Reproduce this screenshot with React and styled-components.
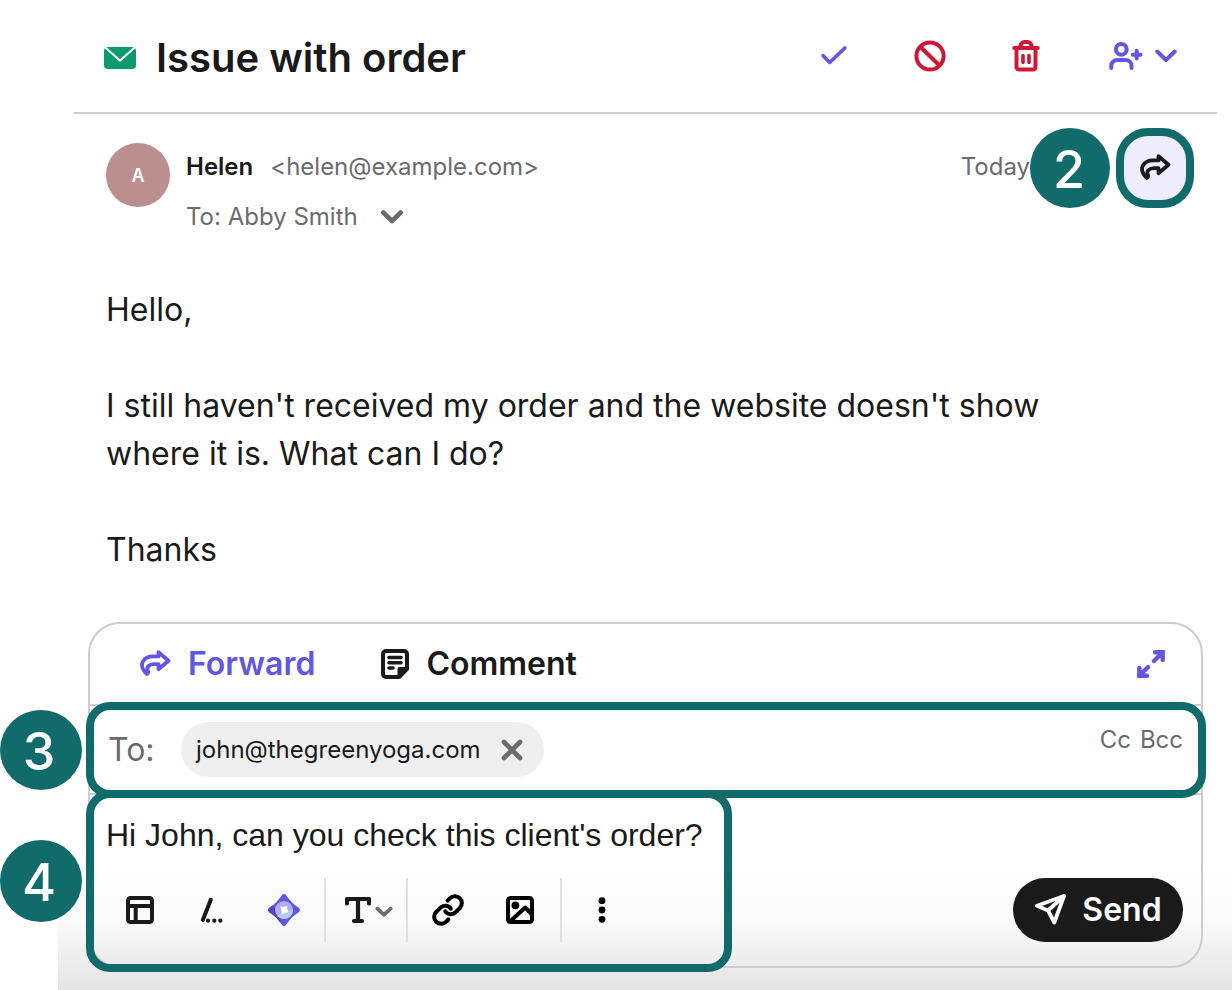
import React, { useState } from 'react'
import styled, { createGlobalStyle } from 'styled-components'

const GlobalStyle = createGlobalStyle`
  * {
    box-sizing: border-box;
  }

  body {
    margin: 0;
    background: #fff;
    color: #1a1a1a;
    font-family: Inter, "Liberation Sans", sans-serif;
  }

  button, input, textarea {
    font: inherit;
    color: inherit;
  }

  svg {
    display: block;
    flex: none;
  }
`

const Page = styled.main`
  display: flex;
  flex-direction: column;
  min-height: 100vh;
  margin-left: 58px;
  padding-bottom: 22px;
  background: linear-gradient(#fff, #fafafa 45%, #e4e4e4) bottom / 100% 128px no-repeat;
`

const Header = styled.header`
  display: flex;
  align-items: center;
  justify-content: space-between;
  height: 114px;
  margin: 0 15px 0 16px;
  padding: 0 40px 0 30px;
  border-bottom: 2px solid #cdcdcd;
`

const Subject = styled.div`
  display: flex;
  align-items: center;
  gap: 20px;
  padding-top: 4px;
`

const Title = styled.h1`
  margin: 0;
  font-size: 40px;
  line-height: 48px;
  font-weight: 600;
`

const Actions = styled.div`
  display: flex;
  align-items: center;
  gap: 64px;
`

const IconButton = styled.button`
  display: flex;
  align-items: center;
  justify-content: center;
  gap: ${(props) => props.$gap || 0}px;
  min-width: 32px;
  height: 32px;
  padding: 0;
  border: 0;
  background: none;
  color: ${(props) => props.$color || '#1a1a1a'};
  cursor: pointer;
`

const AssignButton = styled(IconButton)`
  justify-content: flex-end;
  width: 71px;
`

const Message = styled.article`
  padding: 14px 38px 48px 48px;
`

const MessageHead = styled.div`
  display: flex;
  align-items: flex-start;
  gap: 16px;
  height: 158px;
`

const Avatar = styled.div`
  display: flex;
  align-items: center;
  justify-content: center;
  width: 64px;
  height: 64px;
  margin-top: 15px;
  border-radius: 50%;
  background: #bc8f8f;
  color: #fff;
  font-size: 18px;
  font-weight: 600;
`

const Sender = styled.div`
  flex: 1;
  padding-top: 23px;
  font-size: 24px;
  line-height: 32px;
  color: #6b6b6b;
`

const SenderLine = styled.div`
  display: flex;
  align-items: center;
  gap: 17px;
  margin-bottom: 18px;
`

const Name = styled.strong`
  font-weight: 600;
  color: #1a1a1a;
`

const Recipient = styled.button`
  display: flex;
  align-items: center;
  gap: 23px;
  padding: 0;
  border: 0;
  background: none;
  color: #6b6b6b;
  line-height: 32px;
  cursor: pointer;
`

const MessageTools = styled.div`
  position: relative;
  display: flex;
  gap: 86px;
`

const Time = styled.time`
  padding-top: 23px;
  font-size: 24px;
  line-height: 32px;
  color: #6b6b6b;
`

const ForwardButton = styled.button`
  display: flex;
  align-items: center;
  justify-content: center;
  width: 78px;
  height: 80px;
  padding: 0;
  border: 8px solid #116b6a;
  border-radius: 32px;
  background: #efedfd;
  color: #1a1a1a;
  cursor: pointer;
`

// Numbered step that sits on top of the ui
const Step = styled.span`
  position: absolute;
  top: ${(props) => props.$top}px;
  left: ${(props) => props.$left};
  right: ${(props) => props.$right};
  display: flex;
  align-items: center;
  justify-content: center;
  width: ${(props) => props.$width || 82}px;
  height: ${(props) => props.$height || 80}px;
  padding: 3px ${(props) => props.$pad || 2}px 0 0;
  border-radius: 50%;
  background: #116b6a;
  color: #fff;
  font-size: 52px;
  font-weight: 500;
  line-height: 60px;
`

// Frame drawn around the part that a step is about
const Frame = styled.div`
  position: absolute;
  inset: ${(props) => props.$inset};
  width: ${(props) => props.$width};
  border: 8px solid #116b6a;
  border-radius: 24px;
  pointer-events: none;
`

const Text = styled.div`
  max-width: 1000px;
  font-size: 32px;
  line-height: 48px;

  p {
    margin: 0 0 48px;
  }

  p:last-child {
    margin: 0;
  }
`

const Composer = styled.form`
  margin: 0 29px 0 30px;
  border: 2px solid #cdcdcd;
  border-radius: 32px;
`

const Tabs = styled.div`
  display: flex;
  align-items: center;
  gap: 66px;
  height: 80px;
  padding: 0 34px 0 49px;
`

const Tab = styled.button`
  display: flex;
  align-items: center;
  gap: 17px;
  padding: 0;
  border: 0;
  background: none;
  color: ${(props) => props.$active ? '#6356e0' : '#1a1a1a'};
  font-size: 32px;
  line-height: 40px;
  font-weight: 600;
  cursor: pointer;
`

const Spacer = styled.div`
  flex: 1;
`

const ToRow = styled.div`
  position: relative;
  display: flex;
  align-items: center;
  height: 91px;
  padding: 0 18px;
  border: solid #cdcdcd;
  border-width: 2px 0;
`

const ToLabel = styled.label`
  width: 73px;
  font-size: 32px;
  line-height: 40px;
  color: #6b6b6b;
`

const Chip = styled.span`
  display: flex;
  align-items: center;
  gap: 15px;
  height: 55px;
  padding: 0 16px 0 15px;
  border-radius: 28px;
  background: #efefef;
  font-size: 24px;
  line-height: 32px;
`

const ToInput = styled.input`
  flex: 1;
  min-width: 0;
  margin: 0 16px;
  border: 0;
  outline: 0;
  background: none;
  font-size: 24px;
`

const CopyButtons = styled.div`
  display: flex;
  align-self: flex-start;
  gap: 9px;
  padding-top: 18px;
`

const CopyButton = styled.button`
  padding: 0;
  border: 0;
  background: none;
  color: #6b6b6b;
  font-size: 24px;
  line-height: 32px;
  cursor: pointer;
`

const Editor = styled.div`
  position: relative;
  padding: 20px 18px 24px 16px;
`

const Field = styled.textarea`
  display: block;
  width: 100%;
  height: 40px;
  margin-bottom: 23px;
  padding: 0;
  border: 0;
  outline: 0;
  resize: none;
  background: none;
  font-family: "Liberation Sans", Arial, sans-serif;
  font-size: 32px;
  line-height: 40px;
`

const Toolbar = styled.div`
  display: flex;
  align-items: center;
  justify-content: space-between;
`

const Tools = styled.div`
  display: flex;
`

const ToolGroup = styled.div`
  display: flex;
  align-items: center;
  gap: 40px;
  height: 64px;
  padding: ${(props) => props.$padding || '0 24px'};

  & + & {
    border-left: 2px solid #e0e0e0;
  }
`

const SendButton = styled.button`
  display: flex;
  align-items: center;
  justify-content: center;
  gap: 15px;
  width: 170px;
  height: 64px;
  padding: 0 0 2px;
  border: 0;
  border-radius: 32px;
  background: #1a1a1a;
  color: #fff;
  font-size: 32px;
  font-weight: 600;
  cursor: pointer;
`

const Icon = ({ w, h, stroke = 4, children }) => (
  <svg
    width={w}
    height={h}
    viewBox={`0 0 ${w} ${h}`}
    fill="none"
    stroke="currentColor"
    strokeWidth={stroke}
    strokeLinecap="round"
    strokeLinejoin="round"
    aria-hidden="true"
  >
    {children}
  </svg>
)

const Envelope = () => (
  <Icon w={32} h={22} stroke={2}>
    <rect width="32" height="22" rx="4" fill="#0b9b6d" stroke="none" />
    <path d="M1.5.8 16 13.6 30.5.8" stroke="#fff" strokeLinejoin="miter" />
  </Icon>
)

const Check = () => (
  <Icon w={32} h={32} stroke={3.7}>
    <path d="m5.2 15.7 6.5 6.8L26.8 8" />
  </Icon>
)

const Ban = () => (
  <Icon w={32} h={32} stroke={4}>
    <circle cx="16" cy="16" r="13.6" />
    <path d="m6.5 7 18.5 18" />
  </Icon>
)

const Trash = () => (
  <Icon w={32} h={32} stroke={4}>
    <path d="M4.2 8h23.6" />
    <path d="M10.500 8V6a4 4 0 0 1 4-4h3a4 4 0 0 1 4 4v2" />
    <path d="M6.500 8v19a2.500 2.500 0 0 0 2.500 2.500h14a2.500 2.500 0 0 0 2.500-2.500V8" />
    <path d="M13 15.500v7M19 15.500v7" strokeWidth="3.600" />
  </Icon>
)

const UserPlus = () => (
  <Icon w={36} h={32} stroke={4}>
    <circle cx="12.3" cy="9.3" r="5.4" />
    <path d="M2.2 28v-2a6 6 0 0 1 6-6h8.300a6 6 0 0 1 6 6v2" />
    <path d="M27.7 10.800v7.800M23.800 14.700h7.800" />
  </Icon>
)

const Chevron = ({ stroke = 4 }) => (
  <Icon w={22} h={14} stroke={stroke}>
    <path d="M2.300 2.500 11 11l8.700-8.500" />
  </Icon>
)

const SmallChevron = () => (
  <Icon w={18} h={16} stroke={3.6}>
    <path d="M2.300 6.700 9 12.800l6.700-6.100" stroke="#6b6b6b" />
  </Icon>
)

const Forward = () => (
  <Icon w={32} h={28} stroke={3.8}>
    <path d="M7.800 24C3.500 20.500 1.800 15.200 4 11.400 6.200 7.800 10 6.400 14 6.400h5.500V2.200l10 8.600-10 8.400v-5H15c-5 0-7.800 3-6.200 6.400.8 1.800.2 3-1 3.400z" />
  </Icon>
)

const Note = () => (
  <Icon w={28} h={30}>
    <path d="M2 5a3 3 0 0 1 3-3h18a3 3 0 0 1 3 3v14l-8 9H5a3 3 0 0 1-3-3z" />
    <path d="M26 20h-7.500v7.500z" fill="currentColor" />
    <path d="M8 8.500h12M8 13.700h12M8 19h4" strokeWidth="3.600" />
  </Icon>
)

const Expand = () => (
  <Icon w={28} h={28}>
    <path d="M18 2.300h7.700V10M25.500 2.500 17 11M10 25.700H2.300V18M2.500 25.500 11 17" strokeLinejoin="miter" strokeWidth="4.400" />
  </Icon>
)

const Close = () => (
  <Icon w={22} h={22} stroke={4.6}>
    <path d="m3 3 16 16M19 3 3 19" />
  </Icon>
)

const Layout = () => (
  <Icon w={28} h={28}>
    <rect x="2" y="2" width="24" height="24" rx="2.500" />
    <path d="M2 10h24M9.700 10v16" />
  </Icon>
)

const Slash = () => (
  <Icon w={28} h={28}>
    <path d="M12.800 3.700 4.800 24" />
    <g fill="currentColor" stroke="none">
      <circle cx="10" cy="24.700" r="2.100" />
      <circle cx="16.300" cy="24.700" r="2.100" />
      <circle cx="22.300" cy="24.700" r="2.100" />
    </g>
  </Icon>
)

const Spark = () => (
  <Icon w={32} h={32}>
    <g stroke="none">
      <path d="M16 0c1.600 0 2.300 1.500 4 3.800 2.200 3 5.200 6 8.200 8.200 2.300 1.700 3.800 2.400 3.800 4s-1.500 2.300-3.800 4c-3 2.200-6 5.200-8.200 8.200-1.700 2.300-2.400 3.800-4 3.800s-2.300-1.500-4-3.800c-2.200-3-5.200-6-8.200-8.200C1.500 18.300 0 17.600 0 16s1.500-2.300 3.800-4c3-2.200 6-5.200 8.200-8.200C13.700 1.500 14.400 0 16 0z" fill="#6356e0" />
      <path d="M3.800 12 16 16l-4 12.200c-2.200-3-5.200-6-8.200-8.200C1.500 18.300 0 17.600 0 16s1.500-2.300 3.800-4z" fill="#5246b5" />
      <circle cx="16" cy="16" r="9" fill="#b3aaf0" />
      <path d="M25 16a9 9 0 0 1-15.400 6.300L16 16z" fill="#b3cbfb" />
      <path d="m12.800 12.500 3.200.2 3-1 .3 3.300 1 3-3.300.8-3 1.200-.6-3.500-1-3z" fill="#fff" />
    </g>
  </Icon>
)

const TextFormat = () => (
  <Icon w={26} h={28} stroke={4.2}>
    <path d="M2 7.500V3h22v4.500M13 3v22M9 25h8" />
  </Icon>
)

const LinkIcon = () => (
  <svg width="32" height="32" viewBox="0.5 0.5 23 23" fill="none" stroke="#000" strokeWidth="2.9" strokeLinecap="round" strokeLinejoin="round" aria-hidden="true">
    <path d="M10 13a5 5 0 0 0 7.54.54l3-3a5 5 0 0 0-7.07-7.07l-1.72 1.71" />
    <path d="M14 11a5 5 0 0 0-7.54-.54l-3 3a5 5 0 0 0 7.070 7.070l1.710-1.710" />
  </svg>
)

const Picture = () => (
  <Icon w={28} h={28}>
    <rect x="2" y="2" width="24" height="24" rx="2.500" />
    <circle cx="9.400" cy="9.300" r="3.900" fill="currentColor" stroke="none" />
    <path d="M4 25.500 19.300 11.500 26 18.500" />
  </Icon>
)

const More = () => (
  <Icon w={8} h={28}>
    <g fill="currentColor" stroke="none">
      <circle cx="4" cy="4.700" r="3.400" />
      <circle cx="4" cy="14" r="3.400" />
      <circle cx="4" cy="23.300" r="3.400" />
    </g>
  </Icon>
)

const Plane = () => (
  <Icon w={33} h={32} stroke={3.8}>
    <path d="M30 3 3 12.800l11 4.700 6.300 12z" />
    <path d="M14 17.500 30 3" />
  </Icon>
)

const App = () => {

  const [ tab, setTab ] = useState('forward')
  const [ to, setTo ] = useState(['john@thegreenyoga.com'])

  const removeTo = (mail) => setTo(to.filter((item) => item !== mail))

  return (
    <>
      <GlobalStyle />
      <Page>
        <Header>
          <Subject>
            <Envelope />
            <Title>Issue with order</Title>
          </Subject>
          <Actions>
            <IconButton $color="#6356e0" aria-label="Resolve"><Check /></IconButton>
            <IconButton $color="#ce1836" aria-label="Mark as spam"><Ban /></IconButton>
            <IconButton $color="#ce1836" aria-label="Delete"><Trash /></IconButton>
            <AssignButton $color="#6356e0" $gap={10} aria-label="Assign">
              <UserPlus />
              <Chevron />
            </AssignButton>
          </Actions>
        </Header>

        <Message>
          <MessageHead>
            <Avatar>A</Avatar>
            <Sender>
              <SenderLine>
                <Name>Helen</Name>
                <span>&lt;helen@example.com&gt;</span>
              </SenderLine>
              <Recipient>
                To: Abby Smith
                <Chevron stroke={4.6} />
              </Recipient>
            </Sender>
            <MessageTools>
              <Time>Today</Time>
              <ForwardButton aria-label="Forward message"><Forward /></ForwardButton>
              <Step $top={0} $right="84px" $width={80}>2</Step>
            </MessageTools>
          </MessageHead>
          <Text>
            <p>Hello,</p>
            <p>I still haven't received my order and the website doesn't show where it is. What can I do?</p>
            <p>Thanks</p>
          </Text>
        </Message>

        <Composer onSubmit={(e) => e.preventDefault()}>
          <Tabs>
            <Tab type="button" $active={tab === 'forward'} onClick={() => setTab('forward')}>
              <Forward />
              Forward
            </Tab>
            <Tab type="button" $active={tab === 'comment'} onClick={() => setTab('comment')}>
              <Note />
              Comment
            </Tab>
            <Spacer />
            <IconButton type="button" $color="#6356e0" aria-label="Expand"><Expand /></IconButton>
          </Tabs>

          <ToRow>
            <ToLabel htmlFor="to">To:</ToLabel>
            {to.map((mail) => (
              <Chip key={mail}>
                {mail}
                <IconButton type="button" $color="#6b6b6b" aria-label="Remove" onClick={() => removeTo(mail)}>
                  <Close />
                </IconButton>
              </Chip>
            ))}
            <ToInput id="to" type="email" />
            <CopyButtons>
              <CopyButton type="button">Cc</CopyButton>
              <CopyButton type="button">Bcc</CopyButton>
            </CopyButtons>
            <Frame $inset="-4px -5px -5px -4px" />
            <Step $top={4} $left="-90px" $pad={4}>3</Step>
          </ToRow>

          <Editor>
            <Field aria-label="Message" defaultValue="Hi John, can you check this client's order?" />
            <Toolbar>
              <Tools>
                <ToolGroup $padding="0 24px 0 18px">
                  <IconButton type="button" aria-label="Templates"><Layout /></IconButton>
                  <IconButton type="button" aria-label="Shortcuts"><Slash /></IconButton>
                  <IconButton type="button" aria-label="Assistant"><Spark /></IconButton>
                </ToolGroup>
                <ToolGroup $padding="0 13px 0 19px">
                  <IconButton type="button" $gap={4} aria-label="Text format">
                    <TextFormat />
                    <SmallChevron />
                  </IconButton>
                </ToolGroup>
                <ToolGroup>
                  <IconButton type="button" $color="#000" aria-label="Link"><LinkIcon /></IconButton>
                  <IconButton type="button" $color="#000" aria-label="Image"><Picture /></IconButton>
                </ToolGroup>
                <ToolGroup>
                  <IconButton type="button" $color="#000" aria-label="More"><More /></IconButton>
                </ToolGroup>
              </Tools>
              <SendButton type="submit">
                <Plane />
                Send
              </SendButton>
            </Toolbar>
            <Frame $inset="-5px auto -6px -4px" $width="646px" />
            <Step $top={45} $left="-90px" $height={82} $pad={4}>4</Step>
          </Editor>
        </Composer>
      </Page>
    </>
  )
}

export default App
